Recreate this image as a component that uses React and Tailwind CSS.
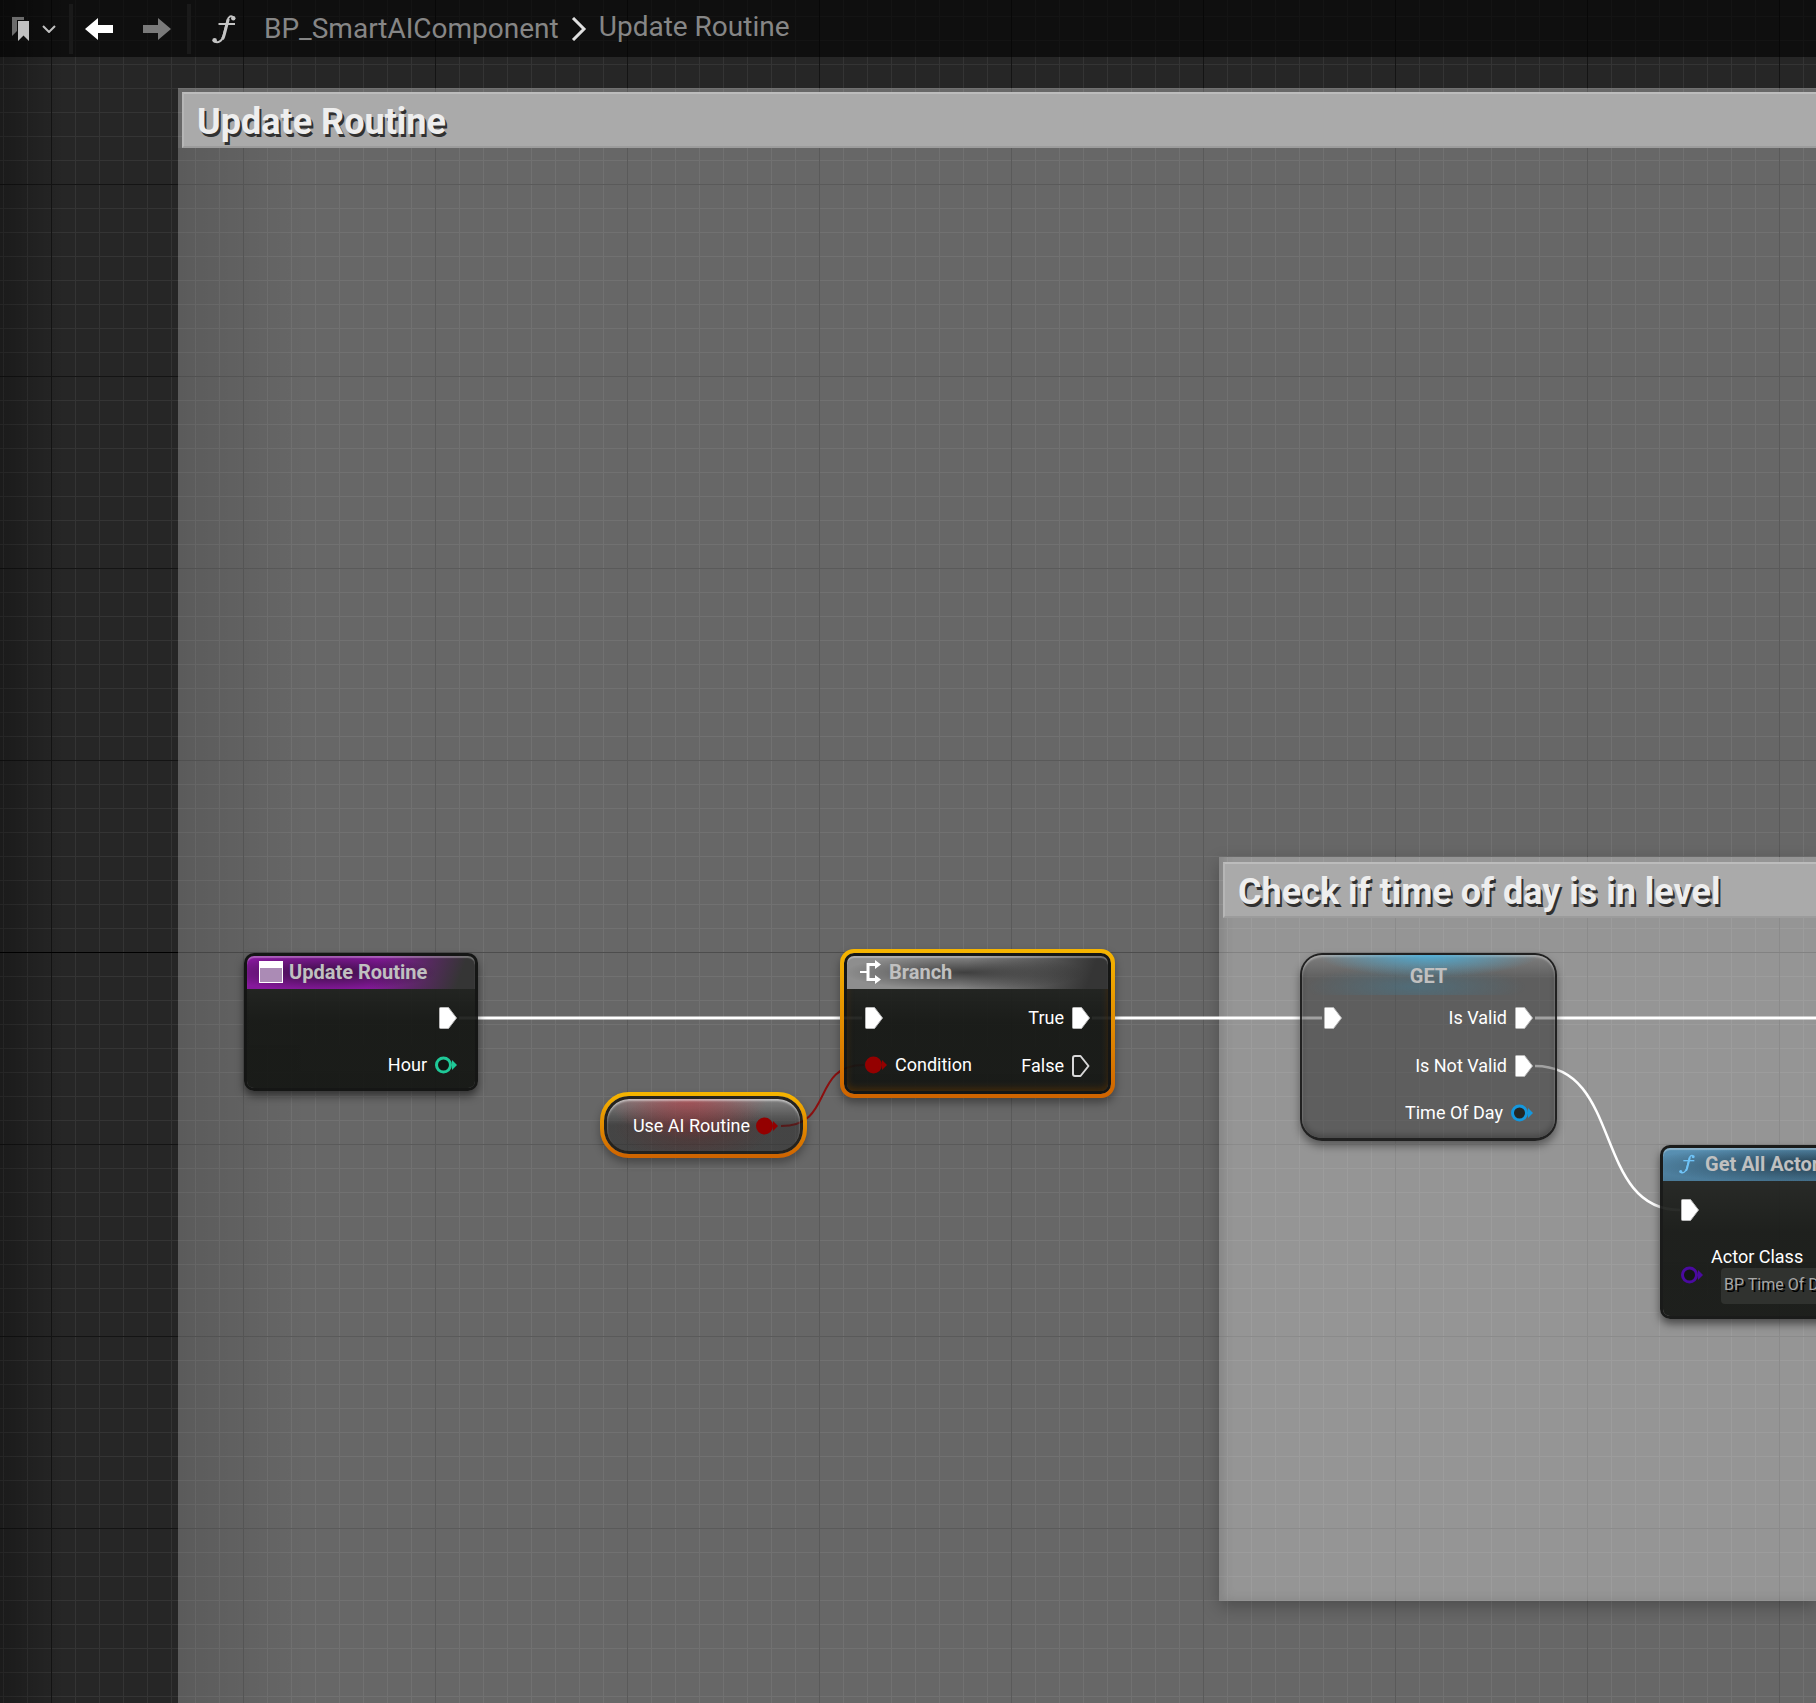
import React from "react";

function FunctionIcon({ className }) {
  return (
    <svg className={className} fill="none" stroke="currentColor" viewBox="0 0 24 30">
      <path strokeLinecap="round" strokeWidth={2} d="M21.5 3.5C19.500 1 16.500 2 15.300 7L11.500 21.500C10 27.500 6 29.300 2.500 27.500" />
      <path strokeWidth={3} d="M16.300 5L12.300 20.500C11.800 22.500 11.300 24 10.500 25" />
      <path strokeWidth={2} d="M6.500 10H23" />
      <circle cx="21.300" cy="4.200" r="2.200" fill="currentColor" stroke="none" />
      <circle cx="2.600" cy="26.200" r="2.300" fill="currentColor" stroke="none" />
    </svg>
  );
}

function BookmarkIcon() {
  return (
    <svg className="w-[18px] h-6" viewBox="0 0 18 24">
      <path fill="#6b6b6b" d="M0 0h12v3H5v11l-5 5z" />
      <path fill="#c0c0c0" d="M6 4h11v20l-5.500-5.500L6 24z" />
    </svg>
  );
}

function ArrowIcon({ className }) {
  return (
    <svg className={className} fill="currentColor" viewBox="0 0 28 22">
      <path d="M0 11L13 0v7h15v8H13v7z" />
    </svg>
  );
}

function BranchIcon() {
  return (
    <svg className="w-[22px] h-6" viewBox="0 0 22 24">
      <path fill="none" stroke="#fff" strokeWidth={2} d="M0 12H7" />
      <path fill="none" stroke="#fff" strokeWidth={3} d="M16 4.500H8V19.500H16" />
      <path fill="#fff" d="M15 0l6 4.500-6 4.500zM15 15l6 4.500-6 4.500z" />
    </svg>
  );
}

function EventIcon() {
  return (
    <svg className="w-6 h-[22px]" viewBox="0 0 24 22">
      <rect width="24" height="22" fill="#fff" />
      <rect x="1" y="7" width="22" height="14" fill="#ab8bb5" />
    </svg>
  );
}

function ExecPin({ empty }) {
  return (
    <svg className="w-[18px] h-[22px] shrink-0" viewBox="0 0 18 22">
      {empty ? (
        <path fill="none" stroke="#d8d8d8" strokeWidth={2} strokeLinejoin="round" d="M1 3Q1 1 3 1H8.500L16.500 11L8.500 21H3Q1 21 1 19z" />
      ) : (
        <path fill="#fff" stroke="#b8b8b8" strokeWidth={1} strokeLinejoin="round" d="M.5 1.500Q.5.5 1.500.5H9.500L17.500 11L9.500 21.500H1.500Q.5 21.500.5 20.500z" />
      )}
    </svg>
  );
}

function DataPin({ color, filled }) {
  return (
    <svg className="w-[22px] h-[18px] shrink-0" viewBox="0 0 22 18">
      <path fill={color} d="M17 4l5 5-5 5z" />
      <circle cx="8.500" cy="9" r="7" fill={filled ? color : "#101412"} fillOpacity={filled ? 1 : 0.75} stroke={color} strokeWidth={3} />
    </svg>
  );
}

// Thin lines every 24px, dark lines every 192px
function Grid() {
  const minor = [24, 48, 72, 96, 120, 144, 168];
  return (
    <svg className="absolute inset-0 w-full h-full" aria-hidden="true">
      <defs>
        <pattern id="grid" x="51" y="184" width="192" height="192" patternUnits="userSpaceOnUse">
          {minor.map((n) => (
            <g key={n} fill="#343434">
              <rect x={n} y="0" width="1" height="192" />
              <rect x="0" y={n} width="192" height="1" />
            </g>
          ))}
          <rect width="1" height="192" fill="#141414" />
          <rect width="192" height="1" fill="#141414" />
        </pattern>
      </defs>
      <rect width="100%" height="100%" fill="url(#grid)" />
      <rect y="952" width="100%" height="1" fill="#000" />
    </svg>
  );
}

function Wires() {
  return (
    <svg className="absolute inset-0 w-full h-full" fill="none" aria-hidden="true">
      <g stroke="#fff" strokeWidth={3}>
        <path d="M459 1018H862" />
        <path d="M1092 1018H1322" />
        <path d="M1535 1018H2400" />
        <path strokeWidth={2.5} d="M1535 1066C1623 1066 1593 1210 1680 1210" />
      </g>
      <path stroke="#8b1010" strokeWidth={2} d="M781 1126C835 1126 810 1065 864 1065" />
    </svg>
  );
}

function SelectionRing({ radius }) {
  return (
    <svg className="absolute left-[-7px] top-[-7px] w-[calc(100%+14px)] h-[calc(100%+14px)]" fill="none" aria-hidden="true">
      <defs>
        <linearGradient id="ring" x1="0" y1="0" x2="0" y2="1">
          <stop offset="0" stopColor="#f5b400" />
          <stop offset="1" stopColor="#cf6400" />
        </linearGradient>
      </defs>
      <rect x="2" y="2" rx={radius} className="w-[calc(100%-4px)] h-[calc(100%-4px)]" stroke="url(#ring)" strokeWidth={4} />
    </svg>
  );
}

function Comment({ title, className }) {
  return (
    <section className={`absolute right-0 bg-white/30 pl-1 ${className}`}>
      <h2 className="h-14 pl-[13px] pt-1 flex items-center bg-[#aaaaaa] border-t-2 border-l-2 border-t-[#bcbcbc] border-l-[#b6b6b6] border-b-2 border-b-[#9c9c9c] text-4xl font-bold text-[#eeeeee] whitespace-nowrap [text-shadow:2px_3px_0_#303030]">
        {title}
      </h2>
    </section>
  );
}

function Node({ className, title, icon, headerClass, selected, children }) {
  return (
    <article className={`absolute rounded-[10px] border-[3px] border-[#0c0d0c]/90 bg-linear-to-b from-[#262825]/92 via-[#141613]/92 to-[#141613]/93 bg-clip-padding ${className}`}>
      <header className={`h-[33px] pb-0.5 flex items-center rounded-t-[7px] shadow-[inset_0_2px_1px_rgba(255,255,255,0.3)] ${headerClass}`}>
        {icon}
        <h3 className="text-xl font-bold text-[#c0c0c0] whitespace-nowrap">{title}</h3>
      </header>
      {children}
      {selected && <SelectionRing radius={12} />}
    </article>
  );
}

export default function App() {
  return (
    <div className="relative min-h-screen overflow-hidden bg-[#262626] font-['Roboto',sans-serif] text-white">
      <Grid />
      <div className="absolute inset-y-0 left-0 w-16 bg-linear-to-r from-black/30 to-transparent" />

      <nav className="relative z-10 h-[57px] flex items-center bg-black/60 text-[28px] text-[#868686]">
        <button aria-label="Bookmarks" className="ml-3 flex items-center gap-3">
          <BookmarkIcon />
          <svg className="w-[14px] h-2" fill="none" stroke="#c0c0c0" strokeWidth={2} viewBox="0 0 14 8">
            <path d="M1 1l6 6 6-6" />
          </svg>
        </button>
        <div className="ml-[13px] w-1 h-[50px] bg-[#1a1a1a]" />
        <button aria-label="Back" className="ml-3 text-white">
          <ArrowIcon className="w-7 h-[22px]" />
        </button>
        <button aria-label="Forward" className="ml-[30px] text-[#7a7a7a]">
          <ArrowIcon className="w-7 h-[22px] rotate-180" />
        </button>
        <div className="ml-4 w-1 h-[50px] bg-[#1a1a1a]" />
        <FunctionIcon className="ml-[21px] w-6 h-[30px] text-[#c4c4c4]" />
        <a href="#component" className="ml-7">BP_SmartAIComponent</a>
        <svg className="mx-3 w-4 h-6" fill="none" stroke="#e0e0e0" strokeWidth={3} viewBox="0 0 16 24">
          <path d="M2 1l11 11L2 23" />
        </svg>
        <a href="#routine" className="pb-1">Update Routine</a>
      </nav>

      <main>
        <Comment title="Update Routine" className="left-[178px] top-[88px] bottom-0 pt-1" />
        <div className="absolute left-[178px] top-[148px] bottom-0 w-32 bg-linear-to-r from-black/12 to-transparent" />
        <Comment
          title="Check if time of day is in level"
          className="left-[1219px] top-[857px] h-[744px] pt-[5px] shadow-[0_6px_16px_rgba(0,0,0,0.25),inset_12px_-8px_12px_-8px_rgba(0,0,0,0.12)]"
        />
        <Wires />

        <Node
          title="Update Routine"
          icon={<EventIcon />}
          className="left-[244px] top-[953px] w-[234px] h-[138px] shadow-[0_5px_8px_rgba(0,0,0,0.5)]"
          headerClass="pl-3 gap-1.5 bg-[radial-gradient(ellipse_110px_18px_at_35%_50%,rgba(30,10,35,0.75),transparent),linear-gradient(110deg,#86199c_55%,#353535_92%)]"
        >
          <div className="flex flex-col items-end pr-[18px] pt-[18px] text-lg leading-[22px]">
            <ExecPin />
            <div className="mt-[25px] flex items-center gap-2">Hour<DataPin color="#1fc998" /></div>
          </div>
        </Node>

        <Node
          title="Branch"
          icon={<BranchIcon />}
          selected
          className="left-[844px] top-[953px] w-[267px] h-[141px] shadow-[0_5px_8px_4px_rgba(0,0,0,0.35),inset_0_-3px_6px_rgba(90,50,0,0.6)]"
          headerClass="pl-[13px] gap-[7px] bg-[radial-gradient(ellipse_120px_18px_at_45%_50%,rgba(30,30,30,0.7),transparent),linear-gradient(110deg,#8e8e8e_45%,#353535_92%)]"
        >
          <div className="flex justify-between px-[18px] pt-[18px] text-lg leading-[22px]">
            <div>
              <ExecPin />
              <div className="mt-[25px] flex items-center gap-2"><DataPin color="#940000" filled />Condition</div>
            </div>
            <div className="flex flex-col items-end gap-[26px]">
              <div className="flex gap-2">True<ExecPin /></div>
              <div className="flex gap-2">False<ExecPin empty /></div>
            </div>
          </div>
        </Node>

        {/* Variable node */}
        <article className="absolute left-[604px] top-[1096px] w-[199px] h-[58px] rounded-[25px] border-[3px] border-[#14120c]/80 bg-clip-padding bg-[radial-gradient(ellipse_80px_40px_at_42%_0%,rgba(190,60,70,0.6),transparent),radial-gradient(ellipse_80px_34px_at_45%_55%,rgba(110,30,30,0.35),transparent),linear-gradient(rgba(140,140,140,0.7),rgba(35,35,35,0.5)_50%)] shadow-[0_5px_8px_4px_rgba(0,0,0,0.3),inset_0_2px_2px_rgba(255,255,255,0.5)]">
          <div className="h-full flex items-center justify-end gap-[6px] pr-[22px] pt-0.5 text-lg leading-[22px]">
            Use AI Routine<DataPin color="#940000" filled />
          </div>
          <SelectionRing radius={27} />
        </article>

        {/* Validated get */}
        <article className="absolute left-[1300px] top-[953px] w-[257px] h-[188px] rounded-[22px] border-2 border-[#141414]/90 border-b-[3px] bg-black/37 bg-clip-padding shadow-[0_5px_8px_rgba(0,0,0,0.4),inset_0_2px_2px_rgba(255,255,255,0.5),inset_0_-3px_6px_rgba(0,0,0,0.25)]">
          <h3 className="h-10 pt-0.5 flex items-center justify-center rounded-t-[20px] bg-[radial-gradient(ellipse_110px_22px_at_50%_0%,rgba(70,175,220,0.85),transparent),radial-gradient(ellipse_110px_22px_at_45%_80%,rgba(60,130,160,0.4),transparent),linear-gradient(rgba(160,160,160,0.5),transparent_60%)] text-xl font-bold text-[#c0c0c0]">
            GET
          </h3>
          <div className="flex justify-between px-[22px] pt-3 text-lg leading-[22px]">
            <ExecPin />
            <div className="flex flex-col items-end gap-[26px]">
              <div className="flex gap-2">Is Valid<ExecPin /></div>
              <div className="flex gap-2">Is Not Valid<ExecPin /></div>
              <div className="flex items-center gap-2 -mt-px">Time Of Day<DataPin color="#1597dd" /></div>
            </div>
          </div>
        </article>

        <Node
          title="Get All Actor"
          icon={<FunctionIcon className="w-4 h-5 text-[#6fc3f7]" />}
          className="left-[1660px] top-[1145px] w-[330px] h-[174px] shadow-[0_5px_8px_rgba(0,0,0,0.5)]"
          headerClass="pl-4 gap-[10px] bg-[radial-gradient(ellipse_180px_20px_at_50%_50%,rgba(20,35,45,0.75),transparent),linear-gradient(#5a92b5,#4a7a98)]"
        >
          <div className="pl-[18px] pt-[18px] text-lg leading-[22px]">
            <ExecPin />
            <div className="mt-[25px] flex items-center gap-2">
              <DataPin color="#4a0aa0" />
              <div className="flex flex-col">
                <label htmlFor="actor-class">Actor Class</label>
                <select
                  id="actor-class"
                  className="ml-[10px] w-40 h-9 pl-[3px] pb-0.5 appearance-none rounded bg-[#30322f] text-base text-[#a6a6a6] [text-shadow:2px_2px_0_#000]"
                >
                  <option>BP Time Of D</option>
                </select>
              </div>
            </div>
          </div>
        </Node>
      </main>
    </div>
  );
}
